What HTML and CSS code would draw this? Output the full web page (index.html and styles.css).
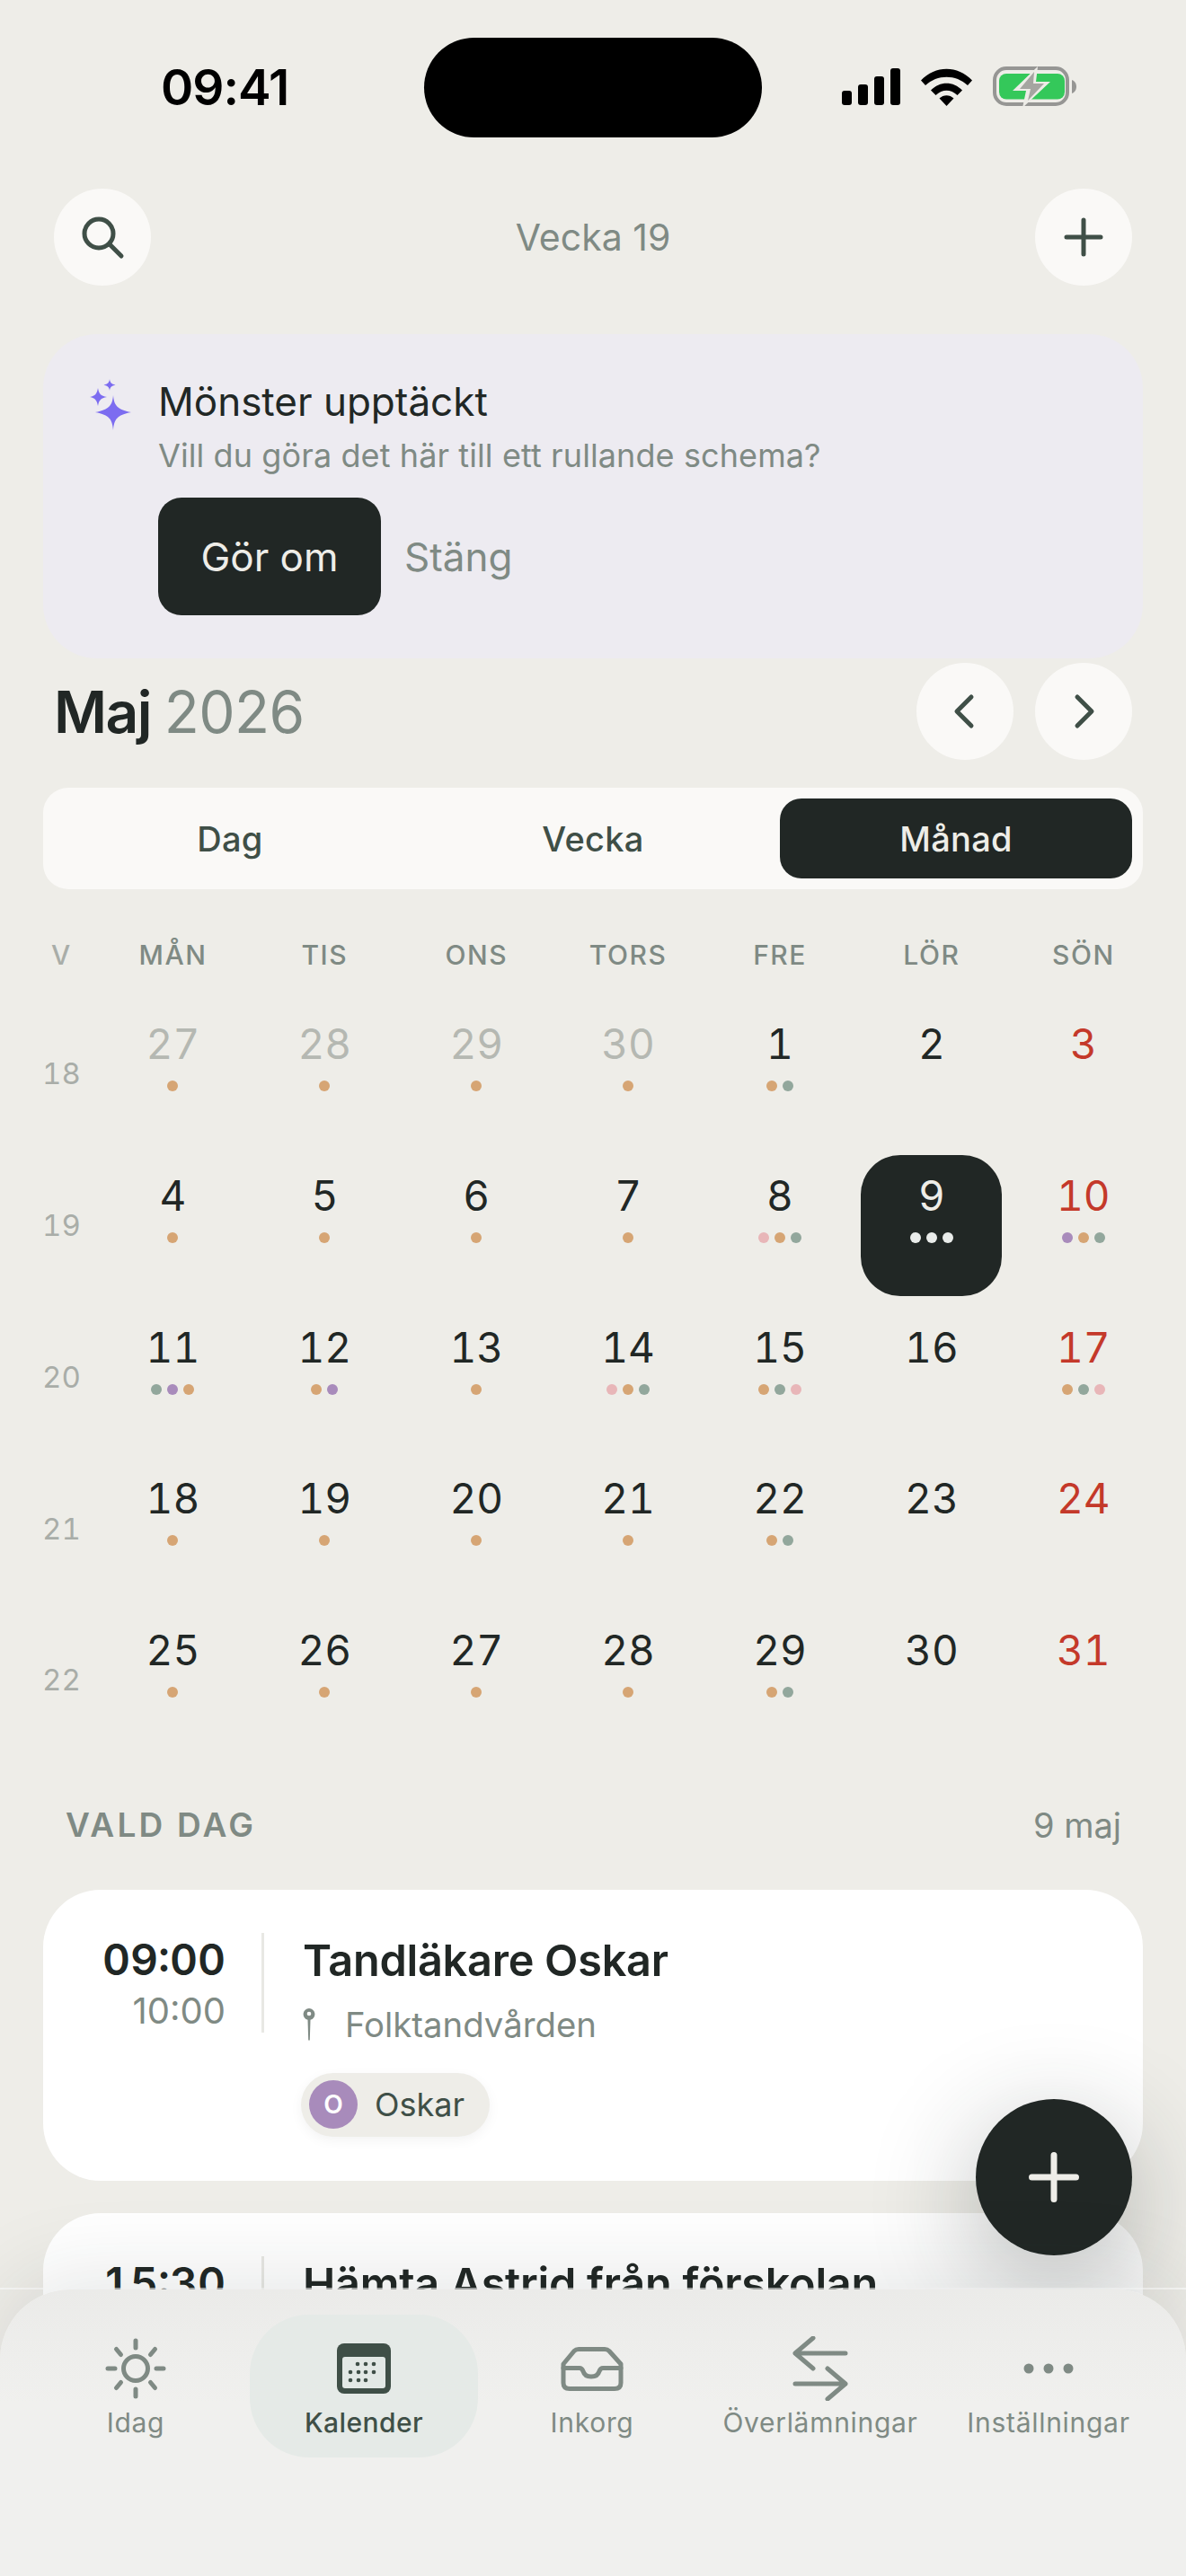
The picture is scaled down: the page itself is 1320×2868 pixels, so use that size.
FILE: index.html
```html
<!DOCTYPE html>
<html lang="sv">

<head>
  <meta charset="UTF-8">
  <meta name="viewport" content="width=device-width, initial-scale=1.0">
  <title>Kalender</title>
  <link rel="stylesheet" href="styles.css">
</head>

<body>
  <div class="phone">
    <div class="status-bar">
      <span class="clock">09:41</span>
      <div class="island"></div>
      <div class="status-icons">
        <svg width="65" height="42" viewBox="0 0 65 42"><rect x="0" y="25" width="11" height="16" rx="3"/><rect x="18" y="18" width="11" height="23" rx="3"/><rect x="36" y="9" width="11" height="32" rx="3"/><rect x="54" y="0" width="11" height="41" rx="3"/></svg>
        <svg width="57" height="42" viewBox="0 0 57 42"><path d="M0 13.500C16 -3.500 41 -3.500 57 13.500L52 19C39 6.500 18 6.500 5 19Z"/><path d="M11 24.500C21 14 36 14 46 24.500L40.500 30C33 23 24 23 16.500 30Z"/><path d="M20.500 33.500C25 29 32 29 36.500 33.500L28.500 42Z"/></svg>
        <svg width="93" height="46" viewBox="0 0 93 46">
          <rect x="2" y="2" width="81" height="40" rx="13" fill="none" stroke="#969694" stroke-width="4"/>
          <rect x="7" y="8" width="73" height="28.500" rx="8" fill="#34c85a"/>
          <path d="M88 15C91 16 93 19 93 22.500C93 26 91 29 88 30Z" fill="#969694"/>
          <path d="M50 0L22 27H37L33 46L64 17H48Z" fill="#edece7"/>
          <path d="M46 6L30 25H42L39 38L57 19H45Z" fill="#a5a5a1"/>
        </svg>
      </div>
    </div>

    <div class="top-bar">
      <button class="round-btn">
        <svg width="52" height="52" viewBox="0 0 52 52" fill="none" stroke="#3f4f47" stroke-width="5" stroke-linecap="round"><circle cx="22" cy="22" r="16"/><path d="M34 34L47 47"/></svg>
      </button>
      <span class="week-title">Vecka 19</span>
      <button class="round-btn">
        <svg width="44" height="44" viewBox="0 0 44 44" fill="none" stroke="#3f4f47" stroke-width="5" stroke-linecap="round"><path d="M22 3V41M3 22H41"/></svg>
      </button>
    </div>

    <div class="banner">
      <svg class="sparkle" width="46" height="57" viewBox="0 0 46 57" fill="#7c6cf0">
        <path d="M26 18C27 29 30 34 46 37C30 40 27 45 26 57C25 45 22 40 6 37C22 34 25 29 26 18Z"/>
        <path d="M9 10C10 16 12 19 19 20C12 21 10 24 9 30C8 24 6 21 0 20C6 19 8 16 9 10Z"/>
        <path d="M22 0C22.500 4 24 5.500 28.500 6.500C24 7.500 22.500 9 22 13C21.500 9 20 7.500 15.500 6.500C20 5.500 21.500 4 22 0Z"/>
      </svg>
      <div class="banner-body">
        <div class="banner-title">Mönster upptäckt</div>
        <div class="banner-text">Vill du göra det här till ett rullande schema?</div>
        <div class="banner-actions">
          <button class="dark-btn">Gör om</button>
          <span class="close-link">Stäng</span>
        </div>
      </div>
    </div>

    <div class="month-row">
      <h1 class="month-title">Maj <span>2026</span></h1>
      <div class="month-nav">
        <button class="round-btn">
          <svg width="28" height="40" viewBox="0 0 28 40" fill="none" stroke="#3f4f47" stroke-width="5" stroke-linecap="round" stroke-linejoin="round"><path d="M21 4L5 20L21 36"/></svg>
        </button>
        <button class="round-btn">
          <svg width="28" height="40" viewBox="0 0 28 40" fill="none" stroke="#3f4f47" stroke-width="5" stroke-linecap="round" stroke-linejoin="round"><path d="M7 4L23 20L7 36"/></svg>
        </button>
      </div>
    </div>

    <div class="segments">
      <div class="segment">Dag</div>
      <div class="segment">Vecka</div>
      <div class="segment active">Månad</div>
    </div>

    <div class="cal-head">
      <span class="v">V</span>
      <span>MÅN</span><span>TIS</span><span>ONS</span><span>TORS</span><span>FRE</span><span>LÖR</span><span>SÖN</span>
    </div>

    <div class="cal-grid">
      <div class="week-no">18</div>
      <div class="day muted"><b>27</b><i class="dots"><u class="o"></u></i></div>
      <div class="day muted"><b>28</b><i class="dots"><u class="o"></u></i></div>
      <div class="day muted"><b>29</b><i class="dots"><u class="o"></u></i></div>
      <div class="day muted"><b>30</b><i class="dots"><u class="o"></u></i></div>
      <div class="day"><b>1</b><i class="dots"><u class="o"></u><u class="g"></u></i></div>
      <div class="day"><b>2</b></div>
      <div class="day sun"><b>3</b></div>

      <div class="week-no">19</div>
      <div class="day"><b>4</b><i class="dots"><u class="o"></u></i></div>
      <div class="day"><b>5</b><i class="dots"><u class="o"></u></i></div>
      <div class="day"><b>6</b><i class="dots"><u class="o"></u></i></div>
      <div class="day"><b>7</b><i class="dots"><u class="o"></u></i></div>
      <div class="day"><b>8</b><i class="dots"><u class="p"></u><u class="o"></u><u class="g"></u></i></div>
      <div class="day selected"><b>9</b><i class="dots"><u class="w"></u><u class="w"></u><u class="w"></u></i></div>
      <div class="day sun"><b>10</b><i class="dots"><u class="l"></u><u class="o"></u><u class="g"></u></i></div>

      <div class="week-no">20</div>
      <div class="day"><b>11</b><i class="dots"><u class="g"></u><u class="l"></u><u class="o"></u></i></div>
      <div class="day"><b>12</b><i class="dots"><u class="o"></u><u class="l"></u></i></div>
      <div class="day"><b>13</b><i class="dots"><u class="o"></u></i></div>
      <div class="day"><b>14</b><i class="dots"><u class="p"></u><u class="o"></u><u class="g"></u></i></div>
      <div class="day"><b>15</b><i class="dots"><u class="o"></u><u class="g"></u><u class="p"></u></i></div>
      <div class="day"><b>16</b></div>
      <div class="day sun"><b>17</b><i class="dots"><u class="o"></u><u class="g"></u><u class="p"></u></i></div>

      <div class="week-no">21</div>
      <div class="day"><b>18</b><i class="dots"><u class="o"></u></i></div>
      <div class="day"><b>19</b><i class="dots"><u class="o"></u></i></div>
      <div class="day"><b>20</b><i class="dots"><u class="o"></u></i></div>
      <div class="day"><b>21</b><i class="dots"><u class="o"></u></i></div>
      <div class="day"><b>22</b><i class="dots"><u class="o"></u><u class="g"></u></i></div>
      <div class="day"><b>23</b></div>
      <div class="day sun"><b>24</b></div>

      <div class="week-no">22</div>
      <div class="day"><b>25</b><i class="dots"><u class="o"></u></i></div>
      <div class="day"><b>26</b><i class="dots"><u class="o"></u></i></div>
      <div class="day"><b>27</b><i class="dots"><u class="o"></u></i></div>
      <div class="day"><b>28</b><i class="dots"><u class="o"></u></i></div>
      <div class="day"><b>29</b><i class="dots"><u class="o"></u><u class="g"></u></i></div>
      <div class="day"><b>30</b></div>
      <div class="day sun"><b>31</b></div>
    </div>

    <div class="section-head">
      <span class="section-title">VALD DAG</span>
      <span class="section-date">9 maj</span>
    </div>

    <div class="event-card">
      <div class="event-time">
        <div class="time-start">09:00</div>
        <div class="time-end">10:00</div>
      </div>
      <div class="event-body">
        <div class="event-title">Tandläkare Oskar</div>
        <div class="event-place">
          <svg width="14" height="36" viewBox="0 0 14 36"><path d="M7 0a6.500 6.500 0 0 1 1.500 12.800L7.800 35a.8.800 0 0 1-1.600 0L5.500 12.800A6.500 6.500 0 0 1 7 0Z" fill="#7f8a84"/><circle cx="7" cy="6" r="2.300" fill="#fff"/></svg>
          <span>Folktandvården</span>
        </div>
        <div class="chip">
          <span class="avatar">O</span>
          <span>Oskar</span>
        </div>
      </div>
    </div>

    <div class="event-card">
      <div class="event-time">
        <div class="time-start">15:30</div>
      </div>
      <div class="event-body">
        <div class="event-title">Hämta Astrid från förskolan</div>
      </div>
    </div>

    <button class="fab">
      <svg width="56" height="56" viewBox="0 0 56 56" fill="none" stroke="#eeede8" stroke-width="7" stroke-linecap="round"><path d="M28 3.500V52.500M3.500 28H52.500"/></svg>
    </button>

    <div class="tab-bar">
      <div class="tab-panel">
        <div class="tab">
          <svg width="72" height="72" viewBox="0 0 72 72" fill="none" stroke="#7f8a84" stroke-width="5" stroke-linecap="round"><circle cx="36" cy="36" r="13.500"/><path d="M36 5V13M36 59V67M5 36H13M59 36H67M14.500 14.500L19.500 20.500M52.500 51.500L57.500 57.500M57.500 14.500L52.500 20.500M19.500 51.500L14.500 57.500"/></svg>
          <span>Idag</span>
        </div>
        <div class="tab active">
          <svg width="72" height="72" viewBox="0 0 72 72"><rect x="6" y="8" width="60" height="56" rx="8" fill="#3f4f47"/><rect x="12" y="23" width="48" height="35" rx="3" fill="#e2e8e5"/><g fill="#3f4f47"><circle cx="29" cy="31" r="2.300"/><circle cx="38" cy="31" r="2.300"/><circle cx="47" cy="31" r="2.300"/><circle cx="21" cy="40" r="2.300"/><circle cx="30" cy="40" r="2.300"/><circle cx="38" cy="40" r="2.300"/><circle cx="47" cy="40" r="2.300"/><circle cx="21" cy="49" r="2.300"/><circle cx="30" cy="49" r="2.300"/><circle cx="38" cy="49" r="2.300"/></g></svg>
          <span>Kalender</span>
        </div>
        <div class="tab">
          <svg width="72" height="72" viewBox="0 0 72 72" fill="none" stroke="#7f8a84" stroke-width="5" stroke-linecap="round" stroke-linejoin="round"><path d="M4 31L16 16.500Q18 14.500 21 14.500H50Q53 14.500 55 16.500L68 31V52Q68 58.500 61 58.500H11Q4 58.500 4 52Z"/><path d="M4 35.500H22C24 35.500 25 36.500 26 39C27 42.500 30 45 35 45C40 45 43 42.500 44 39C45 36.500 46 35.500 48 35.500H68"/></svg>
          <span>Inkorg</span>
        </div>
        <div class="tab">
          <svg width="72" height="72" viewBox="0 0 72 72" fill="none" stroke="#7f8a84" stroke-width="5" stroke-linecap="round" stroke-linejoin="round"><path d="M64 19H8M28 2L8 19L28 36M8 53H64M44 36L64 53L44 70"/></svg>
          <span>Överlämningar</span>
        </div>
        <div class="tab">
          <svg width="72" height="72" viewBox="0 0 72 72" fill="#7f8a84"><circle cx="14" cy="36" r="5.500"/><circle cx="36" cy="36" r="5.500"/><circle cx="58" cy="36" r="5.500"/></svg>
          <span>Inställningar</span>
        </div>
      </div>
    </div>
  </div>
</body>

</html>
```

FILE: styles.css
```css
* {
  box-sizing: border-box;
}

body {
  margin: 0;
  font-family: Inter, "Noto Sans", sans-serif;
  color: #212725;
  background-color: #eeede8;
}

button {
  font-family: inherit;
  border: none;
  padding: 0;
}

.phone {
  position: relative;
  width: 1320px;
  height: 2868px;
  overflow: hidden;
}

/* status bar */
.status-bar {
  display: flex;
  align-items: center;
  height: 194px;
  padding-left: 179px;
  color: #000;
}

.clock {
  width: 293px;
  font-size: 55px;
  font-weight: 600;
  letter-spacing: -1px;
}

.island {
  width: 376px;
  height: 111px;
  border-radius: 56px;
  background-color: #000;
}

.status-icons {
  display: flex;
  align-items: center;
  gap: 23px;
  margin-left: 89px;
}

/* top */
.top-bar {
  display: flex;
  align-items: center;
  justify-content: space-between;
  margin-top: 16px;
  padding: 0 60px;
}

.round-btn {
  display: flex;
  align-items: center;
  justify-content: center;
  width: 108px;
  height: 108px;
  border-radius: 50%;
  background-color: #faf9f7;
}

.week-title {
  font-size: 41px;
  color: #7f8a84;
}

/* banner */
.banner {
  display: flex;
  gap: 30px;
  height: 361px;
  margin: 54px 48px 5px;
  padding: 50px 52px;
  border-radius: 60px;
  background-color: #edebf1;
}

.sparkle {
  flex-shrink: 0;
}

.banner-title {
  font-size: 44px;
  line-height: 50px;
}

.banner-text {
  margin-top: 10px;
  font-size: 36px;
  line-height: 50px;
  letter-spacing: 0.100px;
  color: #7f8a84;
}

.banner-actions {
  display: flex;
  align-items: center;
  gap: 26px;
  margin-top: 22px;
}

.dark-btn {
  width: 248px;
  height: 131px;
  border-radius: 26px;
  font-size: 44px;
  color: #eeede8;
  background-color: #212725;
}

.close-link {
  font-size: 44px;
  color: #7f8a84;
}

/* month */
.month-row {
  display: flex;
  align-items: center;
  justify-content: space-between;
  padding: 0 60px;
}

.month-title {
  margin: 0;
  font-size: 64px;
  font-weight: 600;
  letter-spacing: -1.500px;
}

.month-title span {
  font-weight: 400;
  color: #7f8a84;
  letter-spacing: -0.500px;
}

.month-nav {
  display: flex;
  gap: 24px;
}

.segments {
  display: grid;
  grid-template-columns: repeat(3, 392px);
  gap: 12px;
  height: 113px;
  margin: 31px 48px 0;
  padding: 12px;
  border-radius: 28px;
  background-color: #faf9f7;
}

.segment {
  display: flex;
  align-items: center;
  justify-content: center;
  font-size: 38px;
  font-weight: 500;
  letter-spacing: 0.300px;
  color: #3f4f47;
}

.segment.active {
  border-radius: 24px;
  color: #eeede8;
  background-color: #212725;
}

/* calendar */
.cal-head,
.cal-grid {
  display: grid;
  grid-template-columns: 79px repeat(7, 168.900px);
  margin-left: 29px;
}

.cal-head {
  height: 60px;
  margin-top: 43px;
  align-items: center;
  font-size: 30px;
  font-weight: 500;
  letter-spacing: 1.500px;
  text-align: center;
  color: #7f8a84;
}

.cal-head .v {
  color: #a9ada8;
}

.cal-grid {
  grid-auto-rows: 168.750px;
  margin-top: 18px;
  font-variant-numeric: tabular-nums;
}

.week-no {
  align-self: center;
  text-align: center;
  font-size: 33px;
  color: #a9ada8;
}

.day {
  display: flex;
  flex-direction: column;
  align-items: center;
  margin: 6px 6px;
  padding-top: 18px;
  border-radius: 44px;
}

.day b {
  font-size: 46px;
  font-weight: 400;
  line-height: 54px;
}

.dots {
  display: flex;
  gap: 6px;
  margin-top: 14px;
}

.dots u {
  width: 12px;
  height: 12px;
  border-radius: 50%;
}

.o { background-color: #d6a574; }
.g { background-color: #92a79c; }
.p { background-color: #e8b6b8; }
.l { background-color: #a88bbb; }
.w { background-color: #e9ecea; }

.muted b {
  color: #b5b8b2;
}

.sun b {
  color: #c4392a;
}

.selected {
  background-color: #212725;
}

.selected b {
  color: #eeede8;
}

/* selected day */
.section-head {
  display: flex;
  align-items: center;
  justify-content: space-between;
  height: 50px;
  margin-top: 52px;
  padding: 0 72px 0 73px;
  color: #7f8a84;
}

.section-title {
  font-size: 37px;
  font-weight: 600;
  letter-spacing: 3.200px;
}

.section-date {
  font-size: 38px;
}

.event-card {
  display: flex;
  height: 324px;
  margin: 47px 48px 0;
  padding-top: 48px;
  border-radius: 64px;
  background-color: #fff;
}

.event-card + .event-card {
  margin-top: 36px;
}

.event-time {
  width: 246px;
  height: 111px;
  padding: 0 44px 0 0;
  border-right: 3px solid #e8e8e4;
  text-align: right;
}

.time-start {
  width: 203px;
  font-size: 48px;
  font-weight: 600;
  line-height: 60px;
  font-variant-numeric: tabular-nums;
}

.time-end {
  width: 203px;
  margin-top: 2px;
  font-size: 40px;
  line-height: 50px;
  color: #7f8a84;
}

.event-body {
  padding-left: 43px;
}

.event-title {
  font-size: 48.600px;
  font-weight: 600;
  line-height: 62px;
  letter-spacing: -0.250px;
}

.event-place {
  display: flex;
  align-items: center;
  gap: 33px;
  margin-top: 16px;
  font-size: 38.300px;
  line-height: 48px;
  color: #7f8a84;
}

.chip {
  display: inline-flex;
  align-items: center;
  gap: 19px;
  height: 71px;
  margin-top: 30px;
  margin-left: -2px;
  padding: 0 28px 0 9px;
  border-radius: 36px;
  font-size: 36px;
  color: #3f4f47;
  background-color: #eeede8;
  box-shadow: 0 4px 14px rgba(0, 0, 0, 0.05);
}

.avatar {
  display: flex;
  align-items: center;
  justify-content: center;
  width: 54px;
  height: 54px;
  border-radius: 50%;
  font-size: 28px;
  font-weight: 600;
  color: #fff;
  background-color: #a88bbb;
}

/* floating things */
.fab {
  position: absolute;
  left: 1086px;
  top: 2337px;
  display: flex;
  align-items: center;
  justify-content: center;
  width: 174px;
  height: 174px;
  border-radius: 50%;
  background-color: #212725;
  box-shadow: 0 30px 120px rgba(33, 39, 37, 0.32);
}

.tab-bar {
  position: absolute;
  left: 0;
  right: 0;
  top: 2547px;
  bottom: 0;
  border-top: 2px solid rgba(255, 255, 255, 0.6);
}

.tab-panel {
  display: grid;
  grid-template-columns: repeat(5, 254px);
  height: 100%;
  padding: 28px 24px 0;
  border-radius: 78px 78px 0 0;
  background: linear-gradient(#ebebe9, #f0f0ee 40%);
  box-shadow: 0 -20px 90px rgba(33, 39, 37, 0.1);
}

.tab {
  display: flex;
  flex-direction: column;
  align-items: center;
  height: 159px;
  padding-top: 24px;
  font-size: 30px;
  letter-spacing: 0.700px;
  color: #7f8a84;
}

.tab span {
  margin-top: 6px;
  white-space: nowrap;
}

.tab svg {
  flex-shrink: 0;
}

.tab.active {
  border-radius: 66px;
  color: #3f4f47;
  font-weight: 500;
  letter-spacing: 0.400px;
  background-color: #e5eae7;
}
```
